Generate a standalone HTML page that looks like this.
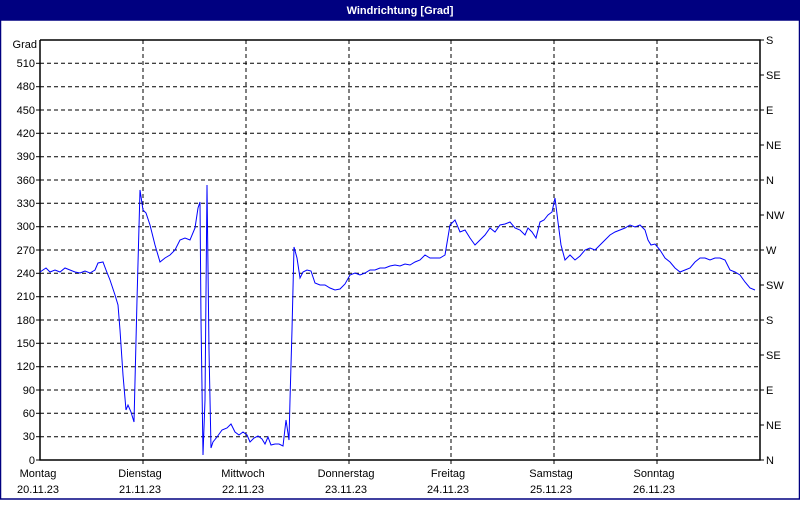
<!DOCTYPE html>
<html><head><style>
body{margin:0;width:800px;height:500px;overflow:hidden;background:#fff;font-family:"Liberation Sans",sans-serif}
</style></head><body>
<svg width="800" height="500" xmlns="http://www.w3.org/2000/svg" font-family="Liberation Sans, sans-serif" font-size="11">
<rect x="0" y="0" width="800" height="500" fill="#fff"/>
<rect x="0" y="0" width="800" height="20" fill="#000080"/>
<text x="400" y="14" text-anchor="middle" fill="#fff" font-weight="bold">Windrichtung [Grad]</text>
<rect x="0.5" y="20" width="799" height="479" fill="none" stroke="#000080" stroke-width="1.5"/>
<g stroke="#000" stroke-dasharray="4,3" stroke-width="1">
<line x1="40" y1="63.3" x2="760" y2="63.3"/><line x1="40" y1="86.7" x2="760" y2="86.7"/><line x1="40" y1="110" x2="760" y2="110"/><line x1="40" y1="133.3" x2="760" y2="133.3"/><line x1="40" y1="156.7" x2="760" y2="156.7"/><line x1="40" y1="180" x2="760" y2="180"/><line x1="40" y1="203.3" x2="760" y2="203.3"/><line x1="40" y1="226.7" x2="760" y2="226.7"/><line x1="40" y1="250" x2="760" y2="250"/><line x1="40" y1="273.3" x2="760" y2="273.3"/><line x1="40" y1="296.7" x2="760" y2="296.7"/><line x1="40" y1="320" x2="760" y2="320"/><line x1="40" y1="343.3" x2="760" y2="343.3"/><line x1="40" y1="366.7" x2="760" y2="366.7"/><line x1="40" y1="390" x2="760" y2="390"/><line x1="40" y1="413.3" x2="760" y2="413.3"/><line x1="40" y1="436.7" x2="760" y2="436.7"/>
<line x1="143" y1="40" x2="143" y2="460"/><line x1="246" y1="40" x2="246" y2="460"/><line x1="349" y1="40" x2="349" y2="460"/><line x1="451" y1="40" x2="451" y2="460"/><line x1="554" y1="40" x2="554" y2="460"/><line x1="657" y1="40" x2="657" y2="460"/>
</g>
<g stroke="#000" stroke-width="1.5" fill="none">
<polyline points="40,40 40,460 760,460 760,40 40,40"/>
</g>
<g stroke="#000">
<line x1="36" y1="63.3" x2="40" y2="63.3"/><line x1="36" y1="86.7" x2="40" y2="86.7"/><line x1="36" y1="110" x2="40" y2="110"/><line x1="36" y1="133.3" x2="40" y2="133.3"/><line x1="36" y1="156.7" x2="40" y2="156.7"/><line x1="36" y1="180" x2="40" y2="180"/><line x1="36" y1="203.3" x2="40" y2="203.3"/><line x1="36" y1="226.7" x2="40" y2="226.7"/><line x1="36" y1="250" x2="40" y2="250"/><line x1="36" y1="273.3" x2="40" y2="273.3"/><line x1="36" y1="296.7" x2="40" y2="296.7"/><line x1="36" y1="320" x2="40" y2="320"/><line x1="36" y1="343.3" x2="40" y2="343.3"/><line x1="36" y1="366.7" x2="40" y2="366.7"/><line x1="36" y1="390" x2="40" y2="390"/><line x1="36" y1="413.3" x2="40" y2="413.3"/><line x1="36" y1="436.7" x2="40" y2="436.7"/><line x1="36" y1="460" x2="40" y2="460"/>
<line x1="760" y1="40" x2="764" y2="40"/><line x1="760" y1="75" x2="764" y2="75"/><line x1="760" y1="110" x2="764" y2="110"/><line x1="760" y1="145" x2="764" y2="145"/><line x1="760" y1="180" x2="764" y2="180"/><line x1="760" y1="215" x2="764" y2="215"/><line x1="760" y1="250" x2="764" y2="250"/><line x1="760" y1="285" x2="764" y2="285"/><line x1="760" y1="320" x2="764" y2="320"/><line x1="760" y1="355" x2="764" y2="355"/><line x1="760" y1="390" x2="764" y2="390"/><line x1="760" y1="425" x2="764" y2="425"/><line x1="760" y1="460" x2="764" y2="460"/>
<line x1="143" y1="460" x2="143" y2="464"/><line x1="246" y1="460" x2="246" y2="464"/><line x1="349" y1="460" x2="349" y2="464"/><line x1="451" y1="460" x2="451" y2="464"/><line x1="554" y1="460" x2="554" y2="464"/><line x1="657" y1="460" x2="657" y2="464"/>
</g>
<g text-anchor="end" fill="#000">
<text x="37" y="48">Grad</text>
<text x="35" y="67">510</text><text x="35" y="90">480</text><text x="35" y="114">450</text><text x="35" y="137">420</text><text x="35" y="160">390</text><text x="35" y="184">360</text><text x="35" y="207">330</text><text x="35" y="230">300</text><text x="35" y="254">270</text><text x="35" y="277">240</text><text x="35" y="300">210</text><text x="35" y="324">180</text><text x="35" y="347">150</text><text x="35" y="370">120</text><text x="35" y="394">90</text><text x="35" y="417">60</text><text x="35" y="440">30</text><text x="35" y="464">0</text>
</g>
<g fill="#000">
<text x="766" y="44">S</text><text x="766" y="79">SE</text><text x="766" y="114">E</text><text x="766" y="149">NE</text><text x="766" y="184">N</text><text x="766" y="219">NW</text><text x="766" y="254">W</text><text x="766" y="289">SW</text><text x="766" y="324">S</text><text x="766" y="359">SE</text><text x="766" y="394">E</text><text x="766" y="429">NE</text><text x="766" y="464">N</text>
</g>
<g text-anchor="middle" fill="#000">
<text x="38" y="477">Montag</text><text x="38" y="493">20.11.23</text>
<text x="140" y="477">Dienstag</text><text x="140" y="493">21.11.23</text>
<text x="243" y="477">Mittwoch</text><text x="243" y="493">22.11.23</text>
<text x="346" y="477">Donnerstag</text><text x="346" y="493">23.11.23</text>
<text x="448" y="477">Freitag</text><text x="448" y="493">24.11.23</text>
<text x="551" y="477">Samstag</text><text x="551" y="493">25.11.23</text>
<text x="654" y="477">Sonntag</text><text x="654" y="493">26.11.23</text>
</g>
<polyline fill="none" stroke="#0000ff" stroke-width="1" points="40,272 46,268 50,272 55,270 60,272 65,268 70,270 75,272 80,273 85,271 90,273 95,270 98,263 103,262 106,270 110,280 115,295 118,305 120,330 123,375 126,410 128,405 131,412 134,422 137,300 140,190 143,210 146,213 150,225 155,245 160,262 165,258 170,255 175,250 180,240 185,238 190,240 195,228 198,208 200,202 201,320 203,455 205,400 207,185 209,350 211,448 213,442 217,437 222,430 227,428 231,424 235,432 239,435 243,432 247,435 250,442 254,438 258,436 262,439 265,444 268,437 271,445 275,444 279,444 283,446 286,420 289,440 290,400 292,330 294,247 297,258 300,278 303,272 307,270 311,271 315,283 320,285 325,285 330,288 335,290 340,289 345,284 350,275 355,273 360,275 365,273 370,270 375,270 380,268 385,268 390,266 395,265 400,266 405,264 410,265 415,262 420,260 425,255 430,258 435,258 440,258 445,255 450,225 455,220 460,232 465,230 470,238 475,245 480,240 485,235 490,228 495,232 500,225 505,224 510,222 515,228 520,230 525,235 528,228 532,232 536,238 540,222 544,220 548,215 552,212 555,198 558,222 561,245 565,260 570,255 575,260 580,256 585,250 590,248 595,250 600,245 605,240 610,235 615,232 620,230 625,228 630,225 635,227 640,225 645,230 648,240 651,245 655,244 660,250 665,258 670,262 675,268 680,272 685,270 690,268 695,262 700,258 705,258 710,260 715,258 720,258 725,260 730,270 735,272 740,275 745,282 750,288 755,290"/>
</svg>
</body></html>
